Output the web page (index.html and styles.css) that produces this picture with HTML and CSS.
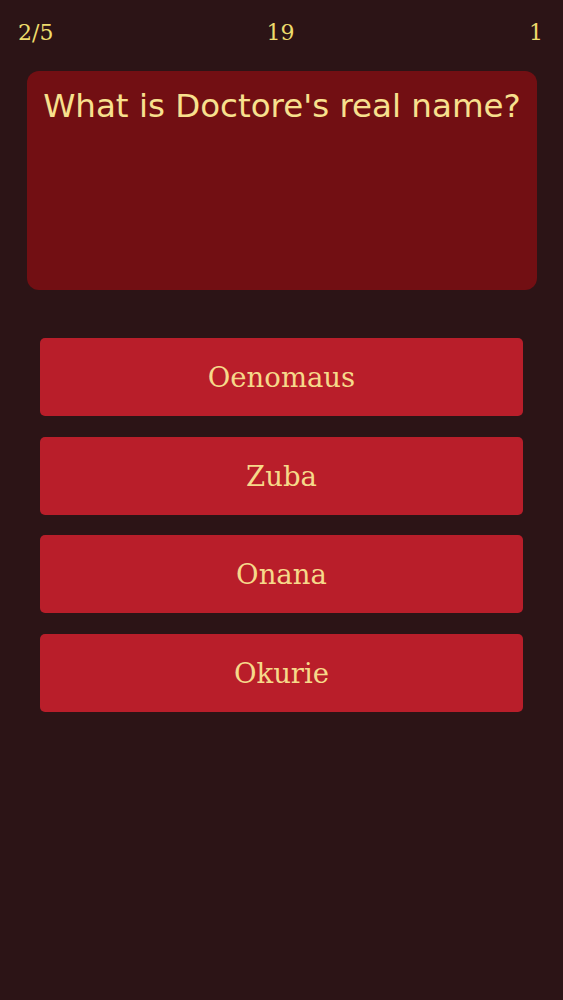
FILE: index.html
```html
<!DOCTYPE html>
<html lang="en">
<head>
  <meta charset="UTF-8">
  <meta name="viewport" content="width=device-width, initial-scale=1.0">
  <title>Quiz</title>
  <link rel="stylesheet" href="styles.css">
</head>
<body>
  <div class="container">
    <div class="top-bar">
      <span class="progress">2/5</span>
      <span class="timer">19</span>
      <span class="score">1</span>
    </div>
    <div class="question-box">
      <p class="question">What is Doctore's real name?</p>
    </div>
    <div class="answers">
      <button class="answer">Oenomaus</button>
      <button class="answer">Zuba</button>
      <button class="answer">Onana</button>
      <button class="answer">Okurie</button>
    </div>
  </div>
</body>
</html>
```

FILE: styles.css
```css
body {
  margin: 0;
  background-color: #2c1416;
  font-family: "DejaVu Serif", serif;
  color: #f2dc82;
  height: 100vh;
}

.container {
  padding: 0 20px 0 18px;
}

.top-bar {
  display: grid;
  grid-template-columns: 1fr auto 1fr;
  align-items: center;
  height: 64px;
  font-size: 22px;
  color: #eedc6c;
}

.timer {
  text-align: center;
}

.score {
  text-align: right;
}

.question-box {
  margin: 7px 6px 0 9px;
  height: 219px;
  background-color: #720f13;
  border-radius: 12px;
  box-sizing: border-box;
  padding: 16px 4px;
  text-align: center;
}

.question {
  margin: 0;
  font-family: "DejaVu Sans", sans-serif;
  font-size: 32.5px;
  color: #f8e08e;
}

.answers {
  display: flex;
  flex-direction: column;
  gap: 20.5px;
  margin: 48px 20px 0 22px;
}

.answer {
  height: 78px;
  border: none;
  border-radius: 5px;
  background-color: #b91e2a;
  color: #f6d98a;
  font-family: "DejaVu Serif", serif;
  font-size: 27.5px;
  cursor: pointer;
}
```
